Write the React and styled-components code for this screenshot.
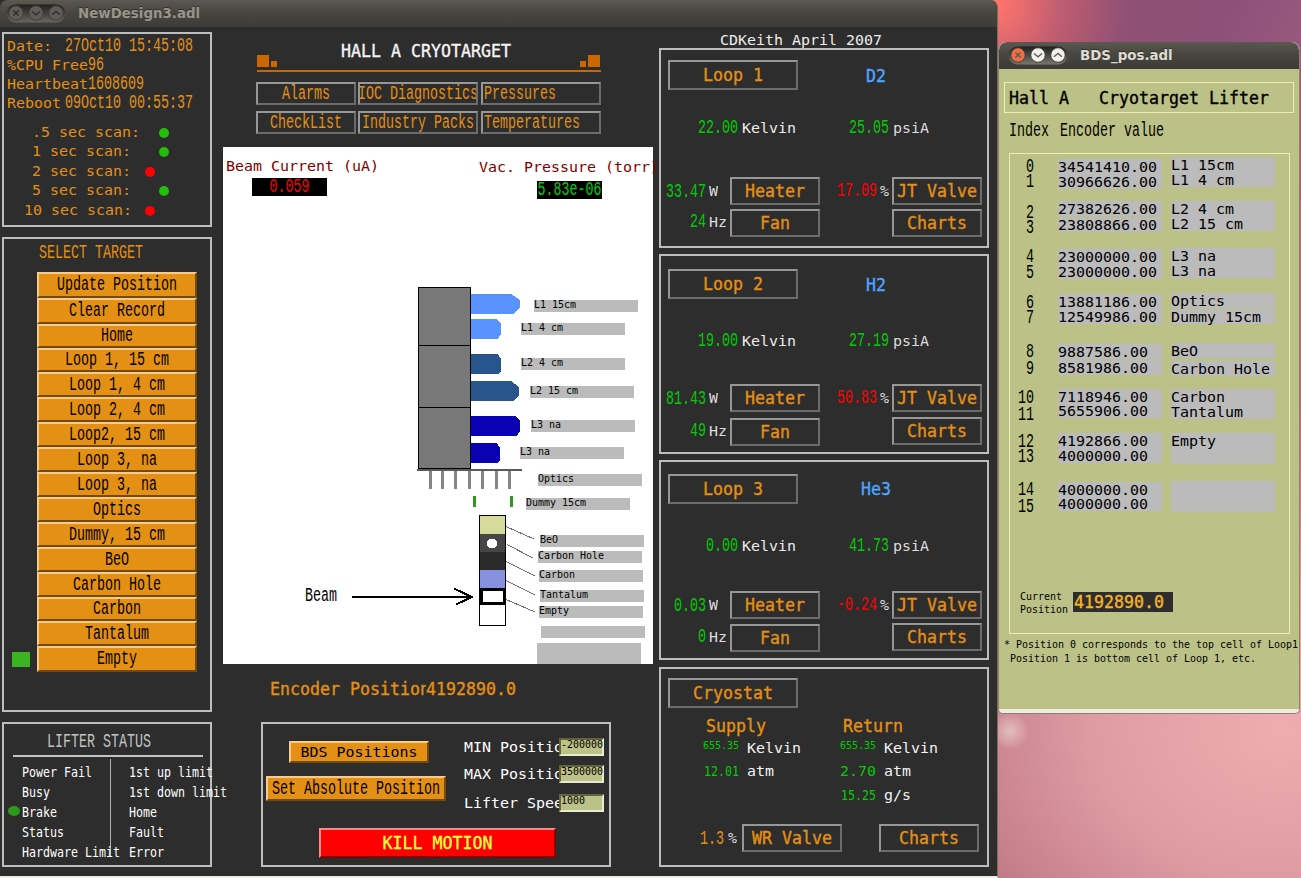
import React from 'react'
import styled, { createGlobalStyle, css } from 'styled-components'

// Data
const SCANS = [
    { label: '.5 sec scan:', indent: 25, ok: true },
    { label: '1 sec scan:', indent: 25, ok: true },
    { label: '2 sec scan:', indent: 25, ok: false },
    { label: '5 sec scan:', indent: 25, ok: true },
    { label: '10 sec scan:', indent: 17, ok: false },
]

const TARGETS = [
    ['Update Position', 26], ['Clear Record', 26], ['Home', 24], ['Loop 1, 15 cm', 24],
    ['Loop 1, 4 cm', 25], ['Loop 2, 4 cm', 25], ['Loop2, 15 cm', 25], ['Loop 3, na', 25],
    ['Loop 3, na', 25], ['Optics', 25], ['Dummy, 15 cm', 25], ['BeO', 25],
    ['Carbon Hole', 25], ['Carbon', 24], ['Tantalum', 25], ['Empty', 26],
]

const STATUS_LEFT = ['Power Fail', 'Busy', 'Brake', 'Status', 'Hardware Limit']
const STATUS_RIGHT = ['1st up limit', '1st down limit', 'Home', 'Fault', 'Error']

const LOOPS = [
    { name: 'Loop 1', gas: 'D2', temp: '22.00', press: '25.05', heat: '33.47', fan: '24', valve: '17.09', tops: [10, 28, 39, 4], gasDrop: 1, chartLift: 0 },
    { name: 'Loop 2', gas: 'H2', temp: '19.00', press: '27.19', heat: '81.43', fan: '49', valve: '50.83', tops: [13, 32, 33, 6], gasDrop: 1, chartLift: 2 },
    { name: 'Loop 3', gas: 'He3', temp: '0.00', press: '41.73', heat: '0.03', fan: '0', valve: '-0.24', tops: [12, 32, 35, 5], gasDrop: 0, chartLift: 2 },
]

const TAGS = [
    ['L1 15cm', 534, 300], ['L1 4 cm', 521, 323], ['L2 4 cm', 521, 358], ['L2 15 cm', 530, 386],
    ['L3 na', 531, 420], ['L3 na', 520, 447], ['Optics', 538, 474], ['Dummy 15cm', 526, 498],
    ['BeO', 540, 535], ['Carbon Hole', 538, 551], ['Carbon', 539, 570], ['Tantalum', 540, 590],
    ['Empty', 539, 606], ['', 541, 626], ['', 537, 643, 21],
]

// [text, top, height], tops are measured from the table frame
const INDEXES = [6, 21, 52, 67, 96, 112, 142, 157, 191, 208, 237, 254, 281, 296, 329, 346].map((top, i) => [i, top - 1, 15])

const ENCODERS = [
    ['34541410.00', 5], ['30966626.00', 20], ['27382626.00', 47], ['23808866.00', 63],
    ['23000000.00', 95], ['23000000.00', 110], ['13881186.00', 140], ['12549986.00', 155],
    ['9887586.00', 190], ['8581986.00', 206], ['7118946.00', 235], ['5655906.00', 249],
    ['4192866.00', 279], ['4000000.00', 294], ['4000000.00', 328], ['4000000.00', 342],
].map(([text, top]) => [text, top, 15])

const NAMES = [
    ['L1 15cm', 3, 15], ['L1 4 cm', 18, 15], ['L2 4 cm', 47, 15], ['L2 15 cm', 62, 15],
    ['L3 na', 94, 15], ['L3 na', 109, 15], ['Optics', 139, 15], ['Dummy 15cm', 155, 15],
    ['BeO', 189, 15], ['Carbon Hole', 207, 15], ['Carbon', 235, 15], ['Tantalum', 250, 15],
    ['Empty', 279, 31], ['', 327, 31],
]

const withGaps = cells => cells.map(([text, top, height], i) => {
    const end = i ? cells[i - 1][1] + cells[i - 1][2] : 0
    return { text, height, gap: top - end }
})

function WindowButtons({ active }) {
    const ring = active ? '#f3f1ee' : '#5e5d58'
    const first = active ? '#ee6f45' : '#5e5d58'
    const mark = active ? '#5f5c55' : '#2f2e2b'
    return (
        <svg width="60" height="19" viewBox="0 0 60 19">
            <defs>
                <linearGradient id={active ? 'pillOn' : 'pillOff'} x1="0" y1="0" x2="0" y2="1">
                    <stop offset="0" stopColor="#20201e" />
                    <stop offset="1" stopColor={active ? '#77766e' : '#66655f'} />
                </linearGradient>
            </defs>
            <rect x="0.5" y="0.5" width="59" height="18" rx="9" fill={`url(#${active ? 'pillOn' : 'pillOff'})`} />
            <circle cx="10" cy="9" r="7.2" fill={first} stroke="#383733" strokeWidth="0.8" />
            <circle cx="30" cy="9" r="7.2" fill={ring} stroke="#383733" strokeWidth="0.8" />
            <circle cx="50" cy="9" r="7.2" fill={ring} stroke="#383733" strokeWidth="0.8" />
            <g fill="none" stroke={mark} strokeWidth="1.4">
                <path d="M7.4 6.4l5.2 5.2M12.6 6.4l-5.2 5.2" />
                <path d="M26 7.5l4 3.4l4 -3.4" />
                <path d="M46 10.8l4 -3.4l4 3.4" />
            </g>
        </svg>
    )
}

function TargetDrawing() {
    return (
        <Drawing viewBox="223 147 430 517" shapeRendering="crispEdges">
            <g fill="#787878" stroke="#000">
                <rect x="418.5" y="287.5" width="52" height="58" />
                <rect x="418.5" y="345.5" width="52" height="62" />
                <rect x="418.5" y="407.5" width="52" height="61" />
            </g>
            <path fill="#5993ff" d="M471 294h40l9 6v8l-7 6h-42zM471 319h25l5 5v10l-3 5h-27z" />
            <path fill="#28558c" d="M471 354h27l3 5v12l-2 3h-28zM471 381h40l8 6v9l-6 5h-42z" />
            <path fill="#0a00b4" d="M471 416h44l5 5v10l-3 5h-46zM471 443h26l3 5v12l-2 3h-27z" />
            <path stroke="#5a5a5a" strokeWidth="2" d="M417 470h105" />
            <path stroke="#868686" strokeWidth="3" d="M430.500 471v18M442.500 471v18M455.500 471v18M469.500 471v18M482.500 471v18M496.500 471v18M509.500 471v18" />
            <path stroke="#2e9a1c" strokeWidth="3" d="M474.500 496v11M511.500 496v11" />
            <rect x="479.500" y="515.500" width="26" height="110" fill="#fff" stroke="#000" />
            <rect x="480" y="516" width="25" height="18" fill="#d6db9c" />
            <rect x="480" y="534" width="25" height="18" fill="#464646" />
            <rect x="480" y="552" width="25" height="18" fill="#2b2b2b" />
            <rect x="480" y="570" width="25" height="18" fill="#8890e0" />
            <circle cx="492" cy="543.500" r="5" fill="#fff" />
            <rect x="481" y="589.500" width="23" height="14" fill="#fff" stroke="#000" strokeWidth="3" />
            <path stroke="#6e6e6e" d="M506 526.500L534 539M507 544.500L533 558M506 561.500L535 576M506 580.500L535 595M506 599.500L535 612" />
            <path fill="none" stroke="#000" strokeWidth="2" d="M352 597h119M454 588.500l18 8.500l-16 7.500" />
        </Drawing>
    )
}

function Loop({ data }) {
    const [head, reading, power, fan] = data.tops
    return (
        <Panel $height={200}>
            <LoopHead $top={head}>
                <Relief $width={130} $height={30}><Text $face="bold">{data.name}</Text></Relief>
                <Gas $face="bold" $color="#4da6ff" $drop={data.gasDrop}>{data.gas}</Gas>
            </LoopHead>
            <ReadingRow $top={reading}>
                <Text $face="tall" $color="#00cd00" $right>{data.temp}</Text>
                <Text $color="#ececec">Kelvin</Text>
                <Text $face="tall" $color="#00cd00" $right>{data.press}</Text>
                <Text $color="#dcdcdc">psiA</Text>
            </ReadingRow>
            <PowerRow $top={power}>
                <HeatText $face="tall" $color="#00cd00" $right>{data.heat}</HeatText>
                <Text $color="#dcdcdc">W</Text>
                <Relief $width={90} $height={28}><Text $face="bold">Heater</Text></Relief>
                <Text $face="tall" $color="#ff0000" $right>{data.valve}</Text>
                <Text $color="#dcdcdc">%</Text>
                <Relief $width={90} $height={28}><Text $face="bold">JT Valve</Text></Relief>
            </PowerRow>
            <PowerRow $top={fan}>
                <FanText $face="tall" $color="#00cd00" $right>{data.fan}</FanText>
                <FanText $color="#dcdcdc">Hz</FanText>
                <Relief $width={90} $height={28}><Text $face="bold">Fan</Text></Relief>
                <span />
                <span />
                <Relief $width={90} $height={28} $lift={data.chartLift}><Text $face="bold">Charts</Text></Relief>
            </PowerRow>
        </Panel>
    )
}

function SystemPanel() {
    return (
        <Panel $height={195}>
            <InfoList>
                <InfoRow><InfoLabel $width={58}>Date:</InfoLabel><Text $face="tall">27Oct10 15:45:08</Text></InfoRow>
                <InfoRow><InfoLabel $width={81}>%CPU Free</InfoLabel><Text $face="tall">96</Text></InfoRow>
                <InfoRow><InfoLabel $width={81}>Heartbeat</InfoLabel><Text $face="tall">1608609</Text></InfoRow>
                <InfoRow><InfoLabel $width={58}>Reboot</InfoLabel><Text $face="tall">09Oct10 00:55:37</Text></InfoRow>
            </InfoList>
            <ScanList>
                {SCANS.map(scan => (
                    <ScanRow key={scan.label} $indent={scan.indent}>
                        <Text>{scan.label}</Text>
                        <Lamp $ok={scan.ok} />
                    </ScanRow>
                ))}
            </ScanList>
        </Panel>
    )
}

function TargetPanel() {
    return (
        <Panel $height={475}>
            <TargetTitle $face="tall">SELECT TARGET</TargetTitle>
            <TargetList>
                {TARGETS.map(([name, height], i) => (
                    <TargetRow key={i}>
                        <Marker $on={name === 'Empty'} />
                        <Raised $width={160} $height={height}><Text $face="tall" $color="#000">{name}</Text></Raised>
                    </TargetRow>
                ))}
            </TargetList>
        </Panel>
    )
}

function LifterStatus() {
    return (
        <Panel $height={145}>
            <StatusTitle $face="tall" $color="#c3c3c3">LIFTER STATUS</StatusTitle>
            <StatusGrid>
                <StatusColumn>
                    {STATUS_LEFT.map(name => (
                        <StatusRow key={name}>
                            <StatusLamp $on={name === 'Brake'} />
                            <Text $face="medium" $color="#fff">{name}</Text>
                        </StatusRow>
                    ))}
                </StatusColumn>
                <StatusDivider />
                <StatusColumn $second>
                    {STATUS_RIGHT.map(name => (
                        <StatusRow key={name}><Text $face="medium" $color="#fff">{name}</Text></StatusRow>
                    ))}
                </StatusColumn>
            </StatusGrid>
        </Panel>
    )
}

function BeamView() {
    return (
        <BeamPanel>
            <BeamReadout>
                <Text $color="#820000">Beam Current (uA)</Text>
                <Readout $width={75}><Text $face="tall" $color="#ff0000">0.059</Text></Readout>
            </BeamReadout>
            <VacReadout>
                <Text $color="#820000">Vac. Pressure (torr)</Text>
                <Readout $width={65}><Text $face="tall" $color="#00cd00">5.83e-06</Text></Readout>
            </VacReadout>
            <TargetDrawing />
            <BeamLabel $face="tall" $color="#000">Beam</BeamLabel>
            {TAGS.map(([name, x, y, height = 12], i) => (
                <Tag key={i} $x={x - 223} $y={y - 147} $height={height}>
                    <Text $face="small" $color="#000">{name}</Text>
                </Tag>
            ))}
        </BeamPanel>
    )
}

function Controls() {
    return (
        <ControlPanel $height={145} $width={350}>
            <ControlTop>
                <ControlButtons>
                    <Raised $width={140} $height={22}><Text $color="#000">BDS Positions</Text></Raised>
                    <Raised $width={180} $height={25}><Text $face="tall" $color="#000">Set Absolute Position</Text></Raised>
                </ControlButtons>
                <Fields>
                    <Field $top={14}><FieldLabel $color="#fff">MIN Position</FieldLabel><Entry><Text $face="small" $color="#000">-200000</Text></Entry></Field>
                    <Field $top={9}><FieldLabel $color="#fff">MAX Position</FieldLabel><Entry><Text $face="small" $color="#000">3500000</Text></Entry></Field>
                    <Field $top={11}><FieldLabel $color="#fff">Lifter Speed</FieldLabel><Entry><Text $face="small" $color="#000">1000</Text></Entry></Field>
                </Fields>
            </ControlTop>
            <KillButton><Text $face="bold" $color="#ffff40">KILL MOTION</Text></KillButton>
        </ControlPanel>
    )
}

function Cryostat() {
    return (
        <Panel $height={200}>
            <LoopHead $top={9}>
                <Relief $width={130} $height={30}><Text $face="bold">Cryostat</Text></Relief>
            </LoopHead>
            <FlowGrid>
                <Flow>
                    <Text $face="bold">Supply</Text>
                    <FlowRow><Text $face="small" $color="#00cd00" $right $up={2}>655.35</Text><Text $color="#f2f2f2">Kelvin</Text></FlowRow>
                    <FlowRow><Text $face="medium" $color="#00cd00" $right>12.01</Text><Text $color="#f2f2f2">atm</Text></FlowRow>
                </Flow>
                <Flow>
                    <Text $face="bold">Return</Text>
                    <FlowRow><Text $face="small" $color="#00cd00" $right $up={2}>655.35</Text><Text $color="#f2f2f2">Kelvin</Text></FlowRow>
                    <FlowRow><Text $color="#00cd00" $right>2.70</Text><Text $color="#f2f2f2">atm</Text></FlowRow>
                    <FlowRow><Text $face="medium" $color="#00cd00" $right>15.25</Text><Text $color="#f2f2f2">g/s</Text></FlowRow>
                </Flow>
            </FlowGrid>
            <CryoFoot>
                <HeatText $face="tall" $right>1.3</HeatText>
                <Text $color="#dcdcdc">%</Text>
                <Relief $width={100} $height={28}><Text $face="bold">WR Valve</Text></Relief>
                <Relief $width={100} $height={28} $lift={-1}><Text $face="bold">Charts</Text></Relief>
            </CryoFoot>
        </Panel>
    )
}

function MainWindow() {
    return (
        <MainFrame>
            <TitleBar>
                <WindowButtons />
                <Title>NewDesign3.adl</Title>
            </TitleBar>
            <MainBody>
                <LeftColumn>
                    <SystemPanel />
                    <TargetPanel />
                    <LifterStatus />
                </LeftColumn>
                <MiddleColumn>
                    <Heading>
                        <HeadingText $face="bold" $color="#f4f4f4">HALL A CRYOTARGET</HeadingText>
                        <Squares><Square $size={12} /><Square $size={6} /><Spacer /><Square $size={6} /><Square $size={12} /></Squares>
                    </Heading>
                    <Menu>
                        <Relief $height={23}><Text $face="tall">Alarms</Text></Relief>
                        <Relief $height={23}><Text $face="tall">IOC Diagnostics</Text></Relief>
                        <Relief $height={23} $left><Text $face="tall">Pressures</Text></Relief>
                        <Relief $height={23}><Text $face="tall">CheckList</Text></Relief>
                        <Relief $height={23}><Text $face="tall">Industry Packs</Text></Relief>
                        <Relief $height={23} $left><Text $face="tall">Temperatures</Text></Relief>
                    </Menu>
                    <BeamView />
                    <Encoder>
                        <EncoderLabel $face="bold">Encoder Position</EncoderLabel>
                        <Text $face="bold">4192890.0</Text>
                    </Encoder>
                    <Controls />
                </MiddleColumn>
                <RightColumn>
                    <Credit $color="#ececec">CDKeith April 2007</Credit>
                    <LoopStack>
                        {LOOPS.map(loop => <Loop key={loop.name} data={loop} />)}
                    </LoopStack>
                    <Cryostat />
                </RightColumn>
            </MainBody>
        </MainFrame>
    )
}

function PositionWindow() {
    return (
        <PositionFrame>
            <TitleBar $active>
                <WindowButtons active />
                <Title $active>BDS_pos.adl</Title>
            </TitleBar>
            <PositionBody>
                <PositionHeading><Text $face="bold" $color="#000">Hall A   Cryotarget Lifter</Text></PositionHeading>
                <ColumnTitles>
                    <Text $face="tall" $color="#000">Index</Text>
                    <Text $face="tall" $color="#000">Encoder value</Text>
                </ColumnTitles>
                <PositionTable>
                    <TableColumns>
                        <Column>
                            {withGaps(INDEXES).map((c, i) => <Cell key={i} $gap={c.gap} $height={c.height}><Text $face="tall" $color="#000" $right>{c.text}</Text></Cell>)}
                        </Column>
                        <Column>
                            {withGaps(ENCODERS).map((c, i) => <Cell key={i} $gap={c.gap} $height={c.height} $fill><Text $color="#000">{c.text}</Text></Cell>)}
                        </Column>
                        <Column>
                            {withGaps(NAMES).map((c, i) => <Cell key={i} $gap={c.gap} $height={c.height} $fill><Text $color="#000">{c.text}</Text></Cell>)}
                        </Column>
                    </TableColumns>
                    <Current>
                        <CurrentLabel>
                            <Text $face="small" $color="#000">Current</Text>
                            <Text $face="small" $color="#000">Position</Text>
                        </CurrentLabel>
                        <CurrentValue><Text $face="bold" $color="#f5b52a">4192890.0</Text></CurrentValue>
                    </Current>
                </PositionTable>
                <Notes>
                    <Text $face="small" $color="#000">* Position 0 corresponds to the top cell of Loop1</Text>
                    <Text $face="small" $color="#000"> Position 1 is bottom cell of Loop 1, etc.</Text>
                </Notes>
            </PositionBody>
        </PositionFrame>
    )
}

export default function App() {
    return (
        <>
            <GlobalStyle />
            <Desktop>
                <MainWindow />
                <PositionWindow />
            </Desktop>
        </>
    )
}

const GlobalStyle = createGlobalStyle`
    * {
        box-sizing: border-box;
    }
    body {
        margin: 0;
        overflow: hidden;
    }
`;

// The screen fonts, by advance width: 9, 8, 10, 7 and 6 pixels
const faces = {
    plain: css`
        font: 400 14.95px/16px "DejaVu Sans Mono", monospace;
        transform: scaleY(0.93);
    `,
    tall: css`
        font: 400 13.33px/16px "Liberation Mono", monospace;
        transform: translateY(1px) scaleY(1.45);
    `,
    bold: css`
        font: 400 16.61px/20px "DejaVu Sans Mono", monospace;
        transform: translateY(1px) scaleY(1.08);
        -webkit-text-stroke: 0.35px currentColor;
    `,
    medium: css`
        font: 400 11.63px/14px "DejaVu Sans Mono", monospace;
        transform: scaleY(1.15);
    `,
    small: css`
        font: 400 9.97px/10px "DejaVu Sans Mono", monospace;
    `,
};

const Text = styled.span`
    display: block;
    white-space: pre;
    color: ${props => props.$color || '#e39015'};
    text-align: ${props => props.$right ? 'right' : 'left'};
    margin-top: ${props => props.$up ? `${-2 * props.$up}px` : 0};
    ${props => faces[props.$face || 'plain']}
`;

const Desktop = styled.div`
    position: relative;
    width: 1301px;
    height: 878px;
    overflow: hidden;
    background:
        radial-gradient(circle at 1010px 731px, rgba(228, 200, 195, .85) 0, rgba(228, 190, 190, .5) 10px, transparent 19px),
        radial-gradient(ellipse 130px 150px at 998px 5px, #ff756c 0, rgba(220, 100, 110, .6) 50%, transparent 100%) no-repeat,
        linear-gradient(115deg, #8f5074 78%, #8c5076 88%, #a05f84 100%) 0 0 / 100% 200px no-repeat,
        radial-gradient(ellipse 420px 330px at 1280px 730px, #eeadb1 0, #df9ba2 45%, #c17c88 80%, #b06c78 100%);
`;

const MainFrame = styled.div`
    position: absolute;
    left: 0;
    top: 0;
    width: 998px;
    height: 878px;
    display: flex;
    flex-direction: column;
    background: #2d2d2d;
    border-right: 1px solid #7c6c5e;
    border-bottom: 2px solid #f0ebe2;
    border-top-right-radius: 8px;
`;

const PositionFrame = styled.div`
    position: absolute;
    left: 998px;
    top: 42px;
    width: 302px;
    height: 672px;
    display: flex;
    flex-direction: column;
    overflow: hidden;
    border: 1px solid #8f7f6d;
    border-top: 0;
    border-radius: 8px 8px 5px 5px;
    background: #f0ebe2;
`;

const TitleBar = styled.div`
    flex: none;
    height: 27px;
    display: flex;
    align-items: center;
    gap: 12px;
    padding-left: ${props => props.$active ? 9 : 6}px;
    background: linear-gradient(#5b5951, #47463f 45%, #3c3b37);
    border-radius: 8px 8px 0 0;
`;

const Title = styled.div`
    font: bold 13.4px/18px "DejaVu Sans", sans-serif;
    white-space: nowrap;
    color: ${props => props.$active ? '#dfdbd2' : '#98958c'};
    text-shadow: 0 -1px 0 rgba(0, 0, 0, .4);
`;

const MainBody = styled.div`
    flex: 1;
    display: flex;
    padding: 5px 0 0 2px;
`;

const LeftColumn = styled.div`
    width: 210px;
    display: flex;
    flex-direction: column;
    gap: 10px;
`;

const MiddleColumn = styled.div`
    width: 430px;
    margin-left: 11px;
`;

const RightColumn = styled.div`
    width: 330px;
    margin-left: 6px;
`;

const Panel = styled.div`
    width: ${props => props.$width ? `${props.$width}px` : '100%'};
    height: ${props => props.$height}px;
    flex: none;
    border: 2px solid #bdbdbd;
`;

const InfoList = styled.div`
    padding: 2px 0 0 3px;
`;

const InfoRow = styled.div`
    display: flex;
    align-items: center;
    height: 19px;
`;

const InfoLabel = styled(Text)`
    width: ${props => props.$width}px;
`;

const ScanList = styled.div`
    padding-top: 10px;
`;

const ScanRow = styled.div`
    display: flex;
    align-items: center;
    justify-content: space-between;
    width: 165px;
    height: 19.5px;
    padding-left: ${props => props.$indent + 3}px;
`;

const Lamp = styled.i`
    width: 10px;
    height: 10px;
    margin: 2px ${props => props.$ok ? 0 : 14}px 0 0;
    border-radius: 50%;
    background: ${props => props.$ok ? '#22be0a' : '#ff0000'};
`;

const TargetTitle = styled(Text)`
    margin: 6px 0 0 35px;
`;

const TargetList = styled.div`
    margin: 11px 0 0 8px;
`;

const TargetRow = styled.div`
    display: flex;
    align-items: center;
    gap: 7px;
`;

const Marker = styled.i`
    width: 18px;
    height: 15px;
    background: ${props => props.$on ? '#3cb421' : 'transparent'};
`;

const Raised = styled.button`
    display: flex;
    align-items: center;
    justify-content: center;
    width: ${props => props.$width}px;
    height: ${props => props.$height}px;
    padding: 0;
    background: #e39015;
    border: 2px solid;
    border-color: #f5cb90 #744a0a #744a0a #f5cb90;
`;

const Relief = styled.button`
    display: flex;
    align-items: center;
    justify-content: ${props => props.$left ? 'flex-start' : 'center'};
    width: ${props => props.$width ? `${props.$width}px` : 'auto'};
    height: ${props => props.$height}px;
    margin-top: ${props => props.$lift ? `${-props.$lift}px` : 0};
    padding: 0 0 0 ${props => props.$left ? 1 : 0}px;
    overflow: hidden;
    background: #2d2d2d;
    border: 2px solid;
    border-color: #979797 #6c6c6c #6c6c6c #979797;
`;

const StatusTitle = styled(Text)`
    margin: 11px 7px 0 9px;
    padding: 0 0 4px 34px;
`;

const StatusGrid = styled.div`
    display: grid;
    grid-template-columns: 106px 1px 90px;
    margin: 0 7px 0 0;
    position: relative;
    &::before {
        content: '';
        position: absolute;
        left: 9px;
        top: 0;
        width: 190px;
        height: 2px;
        background: #c3c3c3;
    }
`;

const StatusColumn = styled.div`
    padding: 7px 0 0 ${props => props.$second ? 18 : 4}px;
`;

const StatusRow = styled.div`
    display: flex;
    align-items: center;
    gap: 2px;
    height: 20px;
`;

const StatusLamp = styled.i`
    width: 12px;
    height: 10px;
    flex: none;
    margin-top: -3px;
    border-radius: 50%;
    background: ${props => props.$on ? '#2e9a1c' : 'transparent'};
`;

const StatusDivider = styled.div`
    margin-top: 4px;
    height: 98px;
    background: #b0b0b0;
`;

const Heading = styled.div`
    width: 344px;
    height: 40px;
    margin-left: 34px;
    padding-top: 9px;
    border-bottom: 2px solid #cc6600;
`;

const HeadingText = styled(Text)`
    height: 20px;
    margin-left: 84px;
`;

const Squares = styled.div`
    display: flex;
    align-items: flex-end;
    gap: 2px;
    height: 12px;
    margin-top: -6px;
    padding-right: 1px;
`;

const Square = styled.i`
    width: ${props => props.$size}px;
    height: ${props => props.$size}px;
    background: #cc6600;
`;

const Spacer = styled.span`
    flex: 1;
`;

const Menu = styled.div`
    display: grid;
    grid-template-columns: 102px 123px 120px;
    row-gap: 6px;
    margin: 10px 0 13px 33px;
    & > :nth-child(3n + 1) {
        margin-right: 2px;
    }
    & > :nth-child(3n + 2) {
        margin-right: 3px;
    }
`;

const BeamPanel = styled.div`
    position: relative;
    display: flex;
    justify-content: space-between;
    width: 430px;
    height: 517px;
    background: #fff;
`;

const BeamReadout = styled.div`
    padding: 11px 0 0 3px;
    & > div {
        margin: 4px 0 0 26px;
    }
`;

const VacReadout = styled.div`
    width: 174px;
    padding-top: 12px;
    & > div {
        margin: 6px 0 0 58px;
    }
`;

const Readout = styled.div`
    display: flex;
    align-items: center;
    justify-content: center;
    width: ${props => props.$width}px;
    height: 18px;
    background: #000;
`;

const Drawing = styled.svg`
    position: absolute;
    left: 0;
    top: 0;
    width: 430px;
    height: 517px;
`;

const BeamLabel = styled(Text)`
    position: absolute;
    left: 82px;
    top: 441px;
`;

const Tag = styled.div`
    position: absolute;
    left: ${props => props.$x}px;
    top: ${props => props.$y}px;
    width: 104px;
    height: ${props => props.$height}px;
    background: #bbb;
`;

const Encoder = styled.div`
    display: flex;
    align-items: center;
    height: 58px;
    padding: 0 0 8px 47px;
`;

const EncoderLabel = styled(Text)`
    width: 156px;
    overflow: hidden;
`;

const ControlPanel = styled(Panel)`
    margin-left: 38px;
`;

const ControlTop = styled.div`
    display: flex;
    height: 104px;
`;

const ControlButtons = styled.div`
    width: 201px;
    display: flex;
    flex-direction: column;
    gap: 13px;
    padding: 17px 0 0 3px;
    & > :first-child {
        margin-left: 23px;
    }
`;

const Fields = styled.div`
    flex: 1;
    padding-top: 1px;
`;

const Field = styled.div`
    display: flex;
    align-items: center;
    height: 18px;
    margin-top: ${props => props.$top}px;
    &:first-child {
        margin-top: 13px;
    }
`;

const FieldLabel = styled(Text)`
    width: 95px;
    overflow: hidden;
`;

const Entry = styled.div`
    width: 45px;
    height: 18px;
    background: #bbc187;
    border: 2px solid;
    border-color: #62643f #e6ead0 #e6ead0 #62643f;
`;

const KillButton = styled.button`
    display: flex;
    align-items: center;
    justify-content: center;
    width: 237px;
    height: 30px;
    margin-left: 56px;
    padding: 0;
    background: #ff0000;
    border: 2px solid;
    border-color: #ff8a8a #820000 #820000 #ff8a8a;
`;

const Credit = styled(Text)`
    margin-left: 61px;
`;

const LoopStack = styled.div`
    display: flex;
    flex-direction: column;
    gap: 6px;
    margin-bottom: 7px;
`;

const LoopHead = styled.div`
    display: flex;
    align-items: center;
    height: 30px;
    margin: ${props => props.$top}px 0 0 7px;
`;

const Gas = styled(Text)`
    width: 60px;
    margin: ${props => props.$drop * 2}px 0 0 48px;
    text-align: center;
`;

const ReadingRow = styled.div`
    display: grid;
    grid-template-columns: 77px 60px 83px 60px;
    column-gap: 4px;
    align-items: center;
    height: 20px;
    margin-top: ${props => props.$top}px;
`;

const PowerRow = styled.div`
    display: grid;
    grid-template-columns: 45px 18px 90px 54px 9px 90px;
    column-gap: 3px;
    align-items: center;
    height: 28px;
    margin-top: ${props => props.$top}px;
`;

const HeatText = styled(Text)`
    margin-top: 2px;
`;

const FanText = styled(Text)`
    margin-top: -2px;
`;

const FlowGrid = styled.div`
    display: grid;
    grid-template-columns: 137px 1fr;
    height: 115px;
    padding: 8px 0 0 42px;
`;

const Flow = styled.div`
    & > :first-child {
        height: 20px;
        margin-left: 3px;
    }
`;

const FlowRow = styled.div`
    display: grid;
    grid-template-columns: 36px 60px;
    column-gap: 8px;
    align-items: center;
    height: 23.500px;
`;

const CryoFoot = styled.div`
    display: grid;
    grid-template-columns: 24px 9px 100px 100px;
    column-gap: 4px;
    align-items: center;
    padding-left: 39px;
    & > :nth-child(3) {
        margin-left: 1px;
    }
    & > :last-child {
        margin-left: 34px;
    }
`;

const PositionBody = styled.div`
    flex: none;
    height: 640px;
    padding: 13px 5px 0 5px;
    background: #bbc187;
`;

const PositionHeading = styled.div`
    display: flex;
    align-items: center;
    width: 290px;
    height: 31px;
    padding-left: 4px;
    border: 1px solid #eeeeae;
`;

const ColumnTitles = styled.div`
    display: flex;
    gap: 11px;
    padding: 12px 0 0 5px;
    height: 40px;
`;

const PositionTable = styled.div`
    width: 281px;
    height: 481px;
    margin-left: 5px;
    border: 1px solid #eeeeae;
`;

const TableColumns = styled.div`
    display: grid;
    grid-template-columns: 24px 104px 104px;
    justify-content: start;
    height: 438px;
    & > :nth-child(2) {
        margin-left: 24px;
        margin-right: -24px;
    }
    & > :nth-child(3) {
        margin-left: 33px;
        margin-right: -33px;
    }
`;

const Column = styled.div`
    display: flex;
    flex-direction: column;
`;

const Cell = styled.div`
    flex: none;
    height: ${props => props.$height}px;
    margin-top: ${props => props.$gap}px;
    background: ${props => props.$fill ? '#bbb' : 'transparent'};
`;

const Current = styled.div`
    display: flex;
    padding-left: 10px;
`;

const CurrentLabel = styled.div`
    width: 53px;
    display: flex;
    flex-direction: column;
    gap: 3px;
`;

const CurrentValue = styled.div`
    display: flex;
    align-items: center;
    width: 100px;
    height: 20px;
    padding-left: 1px;
    background: #2d2d2d;
`;

const Notes = styled.div`
    display: flex;
    flex-direction: column;
    gap: 4px;
    padding-top: 6px;
`;
